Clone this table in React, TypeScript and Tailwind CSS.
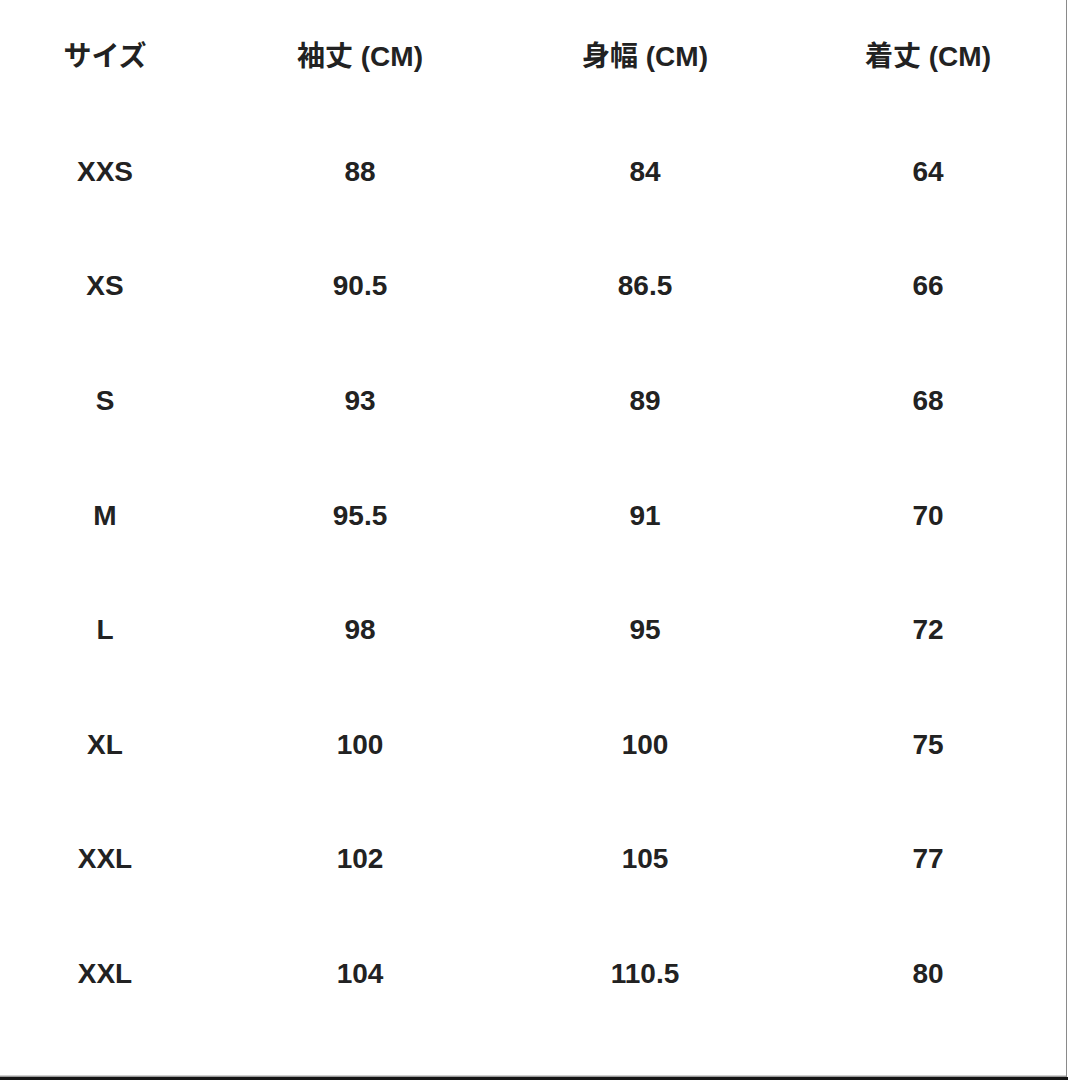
const headers = ["サイズ", "袖丈 (CM)", "身幅 (CM)", "着丈 (CM)"];

const rows = [
  ["XXS", "88", "84", "64"],
  ["XS", "90.5", "86.5", "66"],
  ["S", "93", "89", "68"],
  ["M", "95.5", "91", "70"],
  ["L", "98", "95", "72"],
  ["XL", "100", "100", "75"],
  ["XXL", "102", "105", "77"],
  ["XXL", "104", "110.5", "80"],
];

const Row = ({ cells }: { cells: string[] }) => (
  <div className="grid h-[114.6px] grid-cols-[210px_300px_270px_286px] items-center">
    {cells.map((cell, i) => (
      <div key={i} className={`text-center leading-none ${i === 3 ? "pl-[10px]" : ""}`}>
        {cell}
      </div>
    ))}
  </div>
);

export default function App() {
  return (
    <div className="h-[1080px] w-[1068px] overflow-hidden bg-white">
      <div className="flex h-[1077px] w-[1067px] flex-col border-r border-[#8a8a8a] font-['Liberation_Sans','Noto_Sans_CJK_JP',sans-serif] text-[28px] font-bold text-[#222]">
        <Row cells={headers} />
        {rows.map((r, i) => (
          <Row key={i} cells={r} />
        ))}
        <div className="flex-1" />
        <div className="h-px bg-[#d0d0d0]" />
        <div className="h-px bg-[#9a9a9a]" />
      </div>
      <div className="h-[3px] bg-[#151515]" />
    </div>
  );
}
